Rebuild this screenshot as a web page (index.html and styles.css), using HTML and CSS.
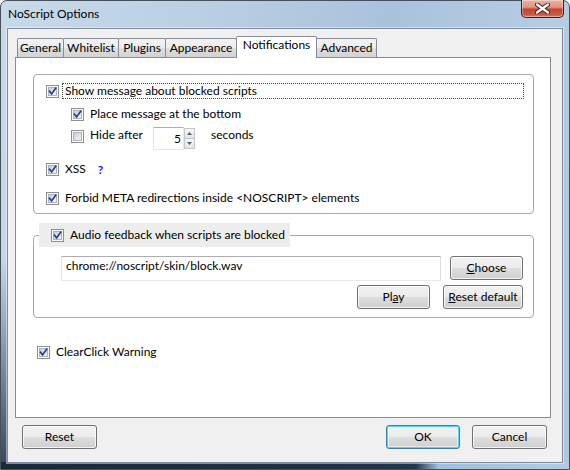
FILE: index.html
```html
<!DOCTYPE html>
<html>
<head>
<meta charset="utf-8">
<title>NoScript Options</title>
<link rel="stylesheet" href="styles.css">
</head>
<body>
<svg class="defs" aria-hidden="true">
  <defs>
    <linearGradient id="cbFill" x1="0" y1="0" x2="1" y2="1">
      <stop offset="0" stop-color="#c6cbd3"/>
      <stop offset="1" stop-color="#f7f7f7"/>
    </linearGradient>
  </defs>
  <symbol id="cb-on" viewBox="0 0 13 13">
    <rect x="0.5" y="0.5" width="12" height="12" fill="#fdfdfd" stroke="#8e8f8f"/>
    <rect x="2.5" y="2.5" width="8" height="8" fill="url(#cbFill)" stroke="#aeb3bb"/>
    <path d="M3.6 6.3 L5.6 8.9 L9.7 3.3" fill="none" stroke="#23408e" stroke-width="1.7" stroke-linecap="square"/>
  </symbol>
  <symbol id="cb-off" viewBox="0 0 13 13">
    <rect x="0.5" y="0.5" width="12" height="12" fill="#fdfdfd" stroke="#8e8f8f"/>
    <rect x="2.5" y="2.5" width="8" height="8" fill="url(#cbFill)" stroke="#aeb3bb"/>
  </symbol>
</svg>

<div class="window">
  <div class="titlebar">
    <span class="title">NoScript Options</span>
    <div class="close">
      <svg width="15" height="11" viewBox="0 0 15 11">
        <path d="M2 1.5 L13 9.5 M13 1.5 L2 9.5" stroke="#3b1a14" stroke-width="4.2" stroke-linecap="round"/>
        <path d="M2 1.5 L13 9.5 M13 1.5 L2 9.5" stroke="#ffffff" stroke-width="2.4" stroke-linecap="round"/>
      </svg>
    </div>
  </div>

  <div class="client">
    <div class="tabs">
      <div class="tab tab-general">General</div>
      <div class="tab tab-whitelist">Whitelist</div>
      <div class="tab tab-plugins">Plugins</div>
      <div class="tab tab-appearance">Appearance</div>
      <div class="tab tab-notifications active">Notifications</div>
      <div class="tab tab-advanced">Advanced</div>
    </div>

    <div class="panel">
      <div class="group">
        <div class="row">
          <svg class="cb"><use href="#cb-on"/></svg>
          <span class="focus">Show message about blocked scripts</span>
        </div>
        <div class="row indent gap-s">
          <svg class="cb"><use href="#cb-on"/></svg>
          <span class="lbl">Place message at the bottom</span>
        </div>
        <div class="row indent tall gap-xs">
          <svg class="cb"><use href="#cb-off"/></svg>
          <span class="lbl hide-label">Hide after</span>
          <div class="spin">
            <div class="spin-field">5</div>
            <div class="spin-btns">
              <div class="spin-btn">
                <svg width="5" height="3" viewBox="0 0 5 3"><path d="M0 3 L2.5 0 L5 3 Z" fill="#4d5f80"/></svg>
              </div>
              <div class="spin-btn">
                <svg width="5" height="3" viewBox="0 0 5 3"><path d="M0 0 L2.5 3 L5 0 Z" fill="#4d5f80"/></svg>
              </div>
            </div>
          </div>
          <span class="seconds">seconds</span>
        </div>
        <div class="row gap-m">
          <svg class="cb"><use href="#cb-on"/></svg>
          <span class="lbl">XSS</span>
          <span class="help">?</span>
        </div>
        <div class="row gap-l">
          <svg class="cb"><use href="#cb-on"/></svg>
          <span class="lbl">Forbid META redirections inside &lt;NOSCRIPT&gt; elements</span>
        </div>
      </div>

      <fieldset class="audio">
        <legend class="caption">
          <svg class="cb"><use href="#cb-on"/></svg>
          <span class="lbl">Audio feedback when scripts are blocked</span>
        </legend>
        <div class="audio-body">
          <div class="audio-row">
            <div class="field">chrome://noscript/skin/block.wav</div>
            <button class="btn w73"><u>C</u>hoose</button>
          </div>
          <div class="audio-row end">
            <button class="btn w73">Pl<u>a</u>y</button>
            <button class="btn w80"><u>R</u>eset default</button>
          </div>
        </div>
      </fieldset>

      <div class="row clear">
        <svg class="cb"><use href="#cb-on"/></svg>
        <span class="lbl">ClearClick Warning</span>
      </div>
    </div>

    <div class="footer">
      <button class="btn w75 reset">Reset</button>
      <button class="btn w74 default">OK</button>
      <button class="btn w75">Cancel</button>
    </div>
  </div>
</div>
</body>
</html>
```

FILE: styles.css
```css
* { box-sizing: border-box; }

html, body {
  margin: 0;
  padding: 0;
}

body {
  width: 570px;
  height: 470px;
  overflow: hidden;
  background: #ffffff;
  font-family: Lato, "Open Sans", sans-serif;
  font-size: 12px;
  color: #000;
}

.defs {
  position: absolute;
  width: 0;
  height: 0;
  overflow: hidden;
}

.window {
  width: 570px;
  height: 470px;
  display: flex;
  flex-direction: column;
  border: 1px solid #46505c;
  border-radius: 7px 7px 0 0;
  background:
    linear-gradient(to right, #1b2839 0%, #22354b 73%, #9fbfdd 77%, #b1cbe3 100%) left bottom / 100% 7px no-repeat,
    linear-gradient(to bottom, rgba(40, 60, 85, 0) 0%, rgba(40, 60, 85, 0) 55%, rgba(36, 54, 78, 0.9) 100%) left top / 7px 100% no-repeat,
    linear-gradient(100deg, #c8d9ea 0%, #bccfe3 30%, #a9c2dc 60%, #b5cce3 85%, #aec6de 100%);
}

.titlebar {
  height: 27px;
  display: flex;
  align-items: flex-start;
  flex: none;
}

.title {
  padding: 5px 0 0 7px;
  line-height: 16px;
  font-size: 12px;
  color: #000;
}

.close {
  width: 43px;
  height: 18px;
  margin: -1px 5px 0 auto;
  border: 1px solid #4a1a14;
  border-top: 0;
  border-radius: 0 0 5px 5px;
  background: linear-gradient(#eab1a4 0%, #de9483 42%, #c6442f 55%, #c55a43 85%, #d77e66 100%);
  box-shadow: inset 0 0 0 1px rgba(255, 255, 255, 0.35);
  display: flex;
  align-items: center;
  justify-content: center;
}

.client {
  height: 435px;
  margin: 0 6px 6px 6px;
  background: #f0f0f0;
  border: 1px solid #7d8b9c;
  box-shadow: 0 0 0 1px rgba(255, 255, 255, 0.45);
  display: flex;
  flex-direction: column;
  flex: none;
}

/* Tabs */
.tabs {
  height: 29px;
  display: flex;
  align-items: flex-end;
  padding: 7px 0 0 9px;
  flex: none;
}

.tab {
  height: 19px;
  margin: 0 0 1px -1px;
  padding: 0;
  border: 1px solid #898c95;
  border-bottom: 0;
  border-radius: 2px 2px 0 0;
  background: linear-gradient(#f3f3f3 0%, #ebebeb 50%, #dedede 50%, #d3d3d3 100%);
  line-height: 18px;
  text-align: center;
  white-space: nowrap;
  flex: none;
}

.tab:first-child { margin-left: 0; }

.tab-general { width: 47px; }
.tab-whitelist { width: 56px; }
.tab-plugins { width: 48px; }
.tab-appearance { width: 72px; }
.tab-notifications { width: 81px; }
.tab-advanced { width: 61px; }

.tab.active {
  height: 22px;
  margin: 0 -1px 0 -1px;
  background: #ffffff;
  line-height: 16px;
  position: relative;
  z-index: 1;
}

.tab.active + .tab { margin-left: 0; }

/* Panel */
.panel {
  width: 536px;
  height: 361px;
  margin: -1px 0 0 7px;
  padding: 16px 16px 0 17px;
  background: #ffffff;
  border: 1px solid #898c95;
  flex: none;
}

.group {
  height: 140px;
  border: 1px solid #a8a8a8;
  border-radius: 4px;
  padding: 7px 9px 0 12px;
}

.row {
  display: flex;
  align-items: center;
  height: 18px;
}

.row.indent { padding-left: 25px; }

.row.tall {
  height: 23px;
  align-items: flex-start;
}

.row.tall .cb { margin-top: 3px; }

.gap-xs { margin-top: 4px; }
.gap-s { margin-top: 5px; }
.gap-m { margin-top: 10px; }
.gap-l { margin-top: 11px; }

.cb {
  width: 13px;
  height: 13px;
  flex: none;
}

.lbl {
  margin-left: 6px;
  line-height: 16px;
  white-space: nowrap;
}

.focus {
  flex: 1;
  height: 16px;
  margin-left: 3px;
  padding: 0 2px;
  border: 1px dotted #4a4a4a;
  line-height: 14px;
  white-space: nowrap;
}

.hide-label {
  width: 63px;
  flex: none;
}

.spin {
  display: flex;
  align-items: center;
  height: 23px;
}

.spin-field {
  width: 31px;
  height: 23px;
  border: 1px solid;
  border-color: #abadb3 #e3e9ef #e3e9ef #e2e3ea;
  text-align: right;
  padding-right: 2px;
  line-height: 21px;
  background: #fff;
}

.spin-btns {
  width: 11px;
  height: 21px;
  display: flex;
  flex-direction: column;
}

.spin-btn {
  flex: 1;
  border: 1px solid #c3c6cc;
  background: linear-gradient(#f7f7f7, #e4e4e4);
  display: flex;
  align-items: center;
  justify-content: center;
}

.spin-btn + .spin-btn { border-top: 0; }

.seconds {
  margin-left: 16px;
  line-height: 16px;
}

.help {
  margin-left: 12px;
  color: #1818e6;
  font-weight: bold;
}

/* Audio group */
.audio {
  margin: 9px 0 0 0;
  padding: 0;
  min-width: 0;
  border: 1px solid #a8a8a8;
  border-radius: 4px;
}

.caption {
  height: 24px;
  margin-left: 5px;
  padding: 0 5px 0 12px;
  background: #ededed;
  display: flex;
  align-items: center;
}

.audio-body {
  padding: 9px 10px 8px 27px;
}

.audio-row {
  display: flex;
  gap: 9px;
}

.audio-row.end {
  margin-top: 4px;
  justify-content: flex-end;
  gap: 13px;
}

.field {
  flex: 1;
  height: 25px;
  border: 1px solid;
  border-color: #abadb3 #dbdfe6 #e3e9ef #e2e3ea;
  background: #fff;
  padding-left: 4px;
  line-height: 18px;
  white-space: nowrap;
}

/* Buttons */
.btn {
  height: 24px;
  padding: 0;
  border: 1px solid #707070;
  border-radius: 3px;
  background: linear-gradient(#f2f2f2 0%, #ebebeb 48%, #dddddd 52%, #cfcfcf 100%);
  box-shadow: inset 0 0 0 1px rgba(255, 255, 255, 0.75);
  font-family: inherit;
  font-size: 12px;
  color: #000;
  text-align: center;
  line-height: 20px;
  flex: none;
}

.btn u { text-decoration: underline; }

.w73 { width: 73px; }
.w74 { width: 74px; }
.w75 { width: 75px; }
.w80 { width: 80px; }

.btn.default {
  border-color: #3c7fb1;
  box-shadow: inset 0 0 0 1px #58d3fb, inset 0 0 0 2px rgba(255, 255, 255, 0.5);
}

.row.clear {
  margin-top: 25px;
  padding-left: 4px;
}

.footer {
  display: flex;
  gap: 12px;
  padding: 7px 15px 0 14px;
}

.footer .reset { margin-right: auto; }
```
